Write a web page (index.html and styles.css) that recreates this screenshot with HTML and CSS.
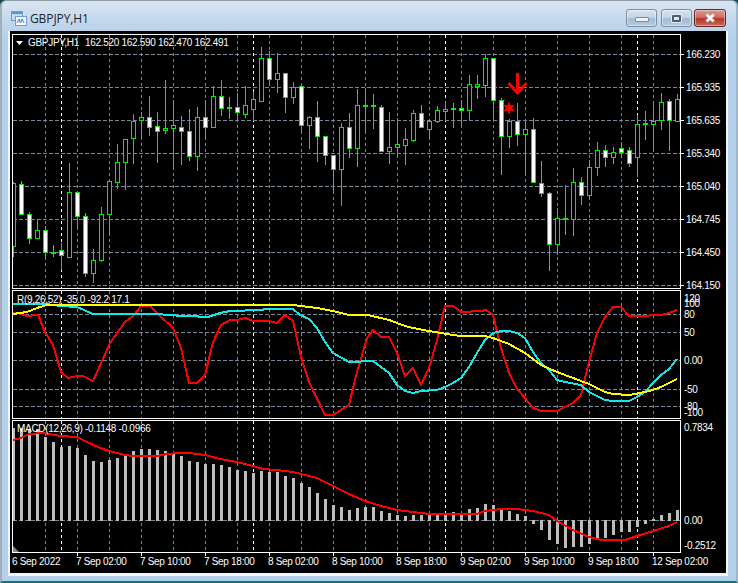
FILE: index.html
```html
<!DOCTYPE html>
<html lang="en">
<head>
<meta charset="utf-8">
<title>GBPJPY,H1</title>
<link rel="stylesheet" href="styles.css">
</head>
<body>
<div class="win">
  <header class="title">
    <svg class="app-icon" viewBox="0 0 16 16" width="16" height="16" aria-hidden="true">
      <rect x="0.5" y="0.5" width="11" height="9" fill="#bcd8f2" stroke="#6f9fd6"/>
      <rect x="1" y="1" width="10" height="2" fill="#5f93d2"/>
      <path d="M2 5h1M5 5h1M8 5h1" stroke="#fff"/>
      <rect x="4.5" y="5.500" width="11" height="9" fill="#f4f9ff" stroke="#6f9fd6"/>
      <path d="M6 12l2-4 1.500 4 1.500-4 2 4" fill="none" stroke="#3f7cc2"/>
    </svg>
    <span class="title-text">GBPJPY,H1</span>
    <div class="btns">
      <div class="btn btn-min"><span class="glyph-min"></span></div>
      <div class="btn btn-max"><span class="glyph-max"></span></div>
      <div class="btn btn-close"><span class="glyph-close">✖</span></div>
    </div>
  </header>
  <main class="client">
    <svg class="chart" viewBox="10 31 716 542" width="716" height="542" xmlns="http://www.w3.org/2000/svg">
      <defs>
        <clipPath id="clip-main"><rect x="13" y="35" width="667" height="253"/></clipPath>
        <clipPath id="clip-osc"><rect x="13" y="291" width="667" height="127"/></clipPath>
        <clipPath id="clip-macd"><rect x="13" y="421" width="667" height="131"/></clipPath>
      </defs>

      <g id="grid"></g>
      <g id="candles" clip-path="url(#clip-main)"></g>

      <g clip-path="url(#clip-osc)" class="aliased">
        <polyline class="ln ln-red" points="13,313 18,313 27,316 38,315 45,332 53,345 61,372 68,378 77,376 83,376 93,381 98,370 110,343 125,322 133,316 141,306 150,306 158,314 173,328 181,348 189,383 197,383 205,375 213,342 221,325 230,320 237,320 245,318 253,321 269,321 277,323 285,315 293,321 301,357 309,382 325,415 333,415 349,405 357,372 367,338 373,330 381,337 389,337 397,353 405,376 413,368 421,385 429,368 437,340 445,306 453,306 461,312 481,311 486,310 493,315 501,348 509,373 517,389 525,398 533,408 541,411 557,411 565,407 573,403 581,395 589,362 597,333 605,317 613,307 621,307 629,316 637,316 661,315 669,313 677,310"/>
        <polyline class="ln ln-cyan" points="13,304 47,304 60,306 77,307 93,314 157,314 182,316 197,316 200,317 208,317 220,313 230,311 260,310 267,309 293,309 300,315 309,319 317,328 325,342 333,353 349,362 373,361 381,367 389,373 397,385 405,391 413,393 421,391 437,390 445,387 453,383 461,378 469,367 477,353 485,340 493,333 501,331 509,331 517,333 525,338 533,352 541,363 549,370 557,380 565,382 581,385 589,392 597,396 605,400 613,401 629,401 637,397 645,392 653,383 661,375 669,369 677,359"/>
        <polyline class="ln ln-yellow" points="13,314 20,313 27,312 37,308 47,305 293,305 309,307 317,308 333,311 349,315 368,315 389,320 405,326 413,328 429,331 453,335 461,336 485,336 493,338 509,344 525,353 541,365 557,372 573,378 589,384 605,392 613,394 629,395 645,392 653,390 661,387 677,379"/>
      </g>

      <g id="macd-bars" clip-path="url(#clip-macd)"></g>
      <g clip-path="url(#clip-macd)" class="aliased">
        <polyline class="ln ln-red" points="13,440 21,438 29,434 43,433 61,436 77,437 85,441 100,448 109,451 125,455 133,456 157,456 167,454 180,453 189,453 205,455 220,459 237,462 253,466 263,469 277,470 293,472 317,478 333,486 349,494 365,501 381,506 397,510 413,512 429,514 477,514 485,511 501,509 517,509 533,511 549,515 557,521 573,530 589,537 601,540 625,540 637,536 653,531 669,526 677,522"/>
      </g>

      <g class="marker">
        <path class="arrow" d="M517.500 73V93M508.500 83l9 10 9-10"/>
        <polygon class="star" points="509,101 510.500,105.400 515,104.500 512,108 515,111.500 510.500,110.600 509,115 507.500,110.600 503,111.500 506,108 503,104.500 507.500,105.400"/>
      </g>

      <g class="frames">
        <rect x="12.500" y="34.500" width="668" height="254"/>
        <rect x="12.500" y="290.500" width="668" height="128"/>
        <rect x="12.500" y="420.500" width="668" height="132"/>
      </g>
      <polygon class="corner" points="13,546 19,552 13,552"/>
      <g id="ticks"></g>

      <polygon class="menu-arrow" points="16,41 23,41 19.500,45"/>
      <text class="lbl" x="28" y="46">GBPJPY,H1</text>
      <text class="lbl" x="85" y="46">162.520 162.590 162.470 162.491</text>
      <text class="lbl" x="17" y="303">R(9,26,52) -35.0 -92.2 17.1</text>
      <text class="lbl" x="17" y="432">MACD(12,26,9) -0.1148 -0.0966</text>

      <text class="lbl" x="686" y="58">166.230</text>
      <text class="lbl" x="686" y="91">165.935</text>
      <text class="lbl" x="686" y="124">165.635</text>
      <text class="lbl" x="686" y="157">165.340</text>
      <text class="lbl" x="686" y="190">165.040</text>
      <text class="lbl" x="686" y="223">164.745</text>
      <text class="lbl" x="686" y="256">164.450</text>
      <text class="lbl" x="686" y="289">164.150</text>

      <text class="lbl" x="684" y="302">120</text>
      <text class="lbl" x="684" y="307">100</text>
      <text class="lbl" x="684" y="318">80</text>
      <text class="lbl" x="684" y="336">50</text>
      <text class="lbl" x="684" y="364">0.00</text>
      <text class="lbl" x="684" y="393">-50</text>
      <text class="lbl" x="684" y="410">-80</text>
      <text class="lbl" x="684" y="416">-100</text>

      <text class="lbl" x="684" y="431">0.7834</text>
      <text class="lbl" x="684" y="524">0.00</text>
      <text class="lbl" x="684" y="549">-0.2512</text>

      <text class="lbl" x="12" y="565">6 Sep 2022</text>
      <text class="lbl" x="76" y="565">7 Sep 02:00</text>
      <text class="lbl" x="140" y="565">7 Sep 10:00</text>
      <text class="lbl" x="204" y="565">7 Sep 18:00</text>
      <text class="lbl" x="268" y="565">8 Sep 02:00</text>
      <text class="lbl" x="332" y="565">8 Sep 10:00</text>
      <text class="lbl" x="396" y="565">8 Sep 18:00</text>
      <text class="lbl" x="460" y="565">9 Sep 02:00</text>
      <text class="lbl" x="524" y="565">9 Sep 10:00</text>
      <text class="lbl" x="588" y="565">9 Sep 18:00</text>
      <text class="lbl" x="652" y="565">12 Sep 02:00</text>
    </svg>
  </main>
</div>
<script src="chart.js"></script>
</body>
</html>
```

FILE: styles.css
```css
* { box-sizing: border-box; }

html, body {
  margin: 0;
  height: 100%;
  background: #16454f;
}

.win {
  width: 738px;
  height: 583px;
  display: flex;
  flex-direction: column;
  border-style: solid;
  border-color: #8d9aa6 #9fb8d0 #1a7378 #a3aeb9;
  border-width: 1px 2px 2px 2px;
  border-radius: 6px 6px 0 0;
  background: linear-gradient(180deg, #dbe6f2 0, #c3d7ec 20px, #b4cfe9 40px, #b4cfe9 100%);
  overflow: hidden;
}

.title {
  height: 30px;
  flex: none;
  display: flex;
  align-items: flex-start;
  padding: 9px 10px 0 9px;
}

.app-icon { flex: none; margin-top: 1px; }

.title-text {
  margin-left: 3px;
  font: 12px/18px "Open Sans", "Noto Sans", sans-serif;
  color: #1c2530;
  letter-spacing: -0.1px;
}

.btns {
  margin: -1px 0 0 auto;
  display: flex;
}

.btn {
  width: 31px;
  height: 18px;
  border: 1px solid #7b8ea2;
  border-radius: 3px;
  display: flex;
  align-items: center;
  justify-content: center;
  background: linear-gradient(180deg, #d6e2ef 0, #c4d5e7 45%, #a3bbd3 55%, #b4cbe1 100%);
  box-shadow: inset 0 0 0 1px rgba(255, 255, 255, 0.4);
}

.btn-max { margin-left: 4px; }

.btn-close {
  width: 32px;
  margin-left: 2px;
  border-color: #5b2a28;
  background: linear-gradient(180deg, #dd9c90 0, #cf6d60 45%, #b4352a 55%, #c9685a 100%);
}

.glyph-min {
  width: 14px;
  height: 5px;
  margin-top: 3px;
  background: #eef2f6;
  border: 1px solid #7b8b9c;
  border-radius: 1px;
}

.glyph-max {
  width: 9px;
  height: 7px;
  border: 2px solid #4b5d71;
  border-radius: 1px;
  background: #dfe8f1;
  box-shadow: 0 0 0 1px #e6edf4;
}

.glyph-close {
  font: bold 14px/14px "DejaVu Sans", sans-serif;
  color: #f6f6f6;
  text-shadow: 0 0 1px #5b2a28;
}

.client {
  flex: none;
  width: 720px;
  height: 545px;
  margin: 0 8px 5px 6px;
  border-style: solid;
  border-color: #f2f6fa;
  border-width: 0 2px 3px 2px;
  background: #000;
}

.chart { display: block; }

.aliased, .frames, #grid, #candles, #macd-bars, #ticks { shape-rendering: crispEdges; }

.ln { fill: none; stroke-width: 2; stroke-linejoin: round; }
.ln-red { stroke: #ff0000; }
.ln-cyan { stroke: #12e8ea; }
.ln-yellow { stroke: #ffff00; }

.grid-line { stroke: #778899; stroke-width: 1; stroke-dasharray: 4 2; }
.grid-v { stroke-dasharray: 3 3; }
.sep { stroke: #ffffff; stroke-width: 1; stroke-dasharray: 3 3; }

.wick { fill: #00f000; }
.bull { fill: #000; stroke: #00f000; stroke-width: 1; }
.bear { fill: #fff; stroke: #00f000; stroke-width: 1; }
.bar { fill: #bdbdbd; }

.frames rect { fill: none; stroke: #fff; stroke-width: 1; }
.tick { stroke: #fff; stroke-width: 1; }
.corner { fill: #778899; }
.menu-arrow { fill: #fff; }

.arrow { fill: none; stroke: #ff0000; stroke-width: 3; }
.star { fill: #ff0000; }

.lbl {
  font-family: "Liberation Sans", Arial, sans-serif;
  font-size: 10px;
  letter-spacing: -0.3px;
  fill: #fff;
}
```

FILE: chart.js
```js
// Each candle: [high, bodyTop, bodyBottom, low, kind]; b = up, s = down, d = doji
var CANDLES = [
  [182,183,246,257,'b'],[181,184,214,215,'s'],[212,214,238,244,'s'],[219,230,238,238,'b'],
  [226,230,252,260,'s'],[245,252,252,257,'d'],[243,250,255,270,'s'],[163,192,257,258,'b'],
  [192,192,216,229,'s'],[213,216,273,277,'s'],[249,260,273,283,'b'],[207,214,260,262,'b'],
  [181,181,214,236,'b'],[144,162,182,189,'b'],[139,139,162,190,'b'],[114,121,138,164,'b'],
  [112,117,120,138,'b'],[96,117,127,136,'s'],[112,126,131,163,'s'],[80,128,130,134,'b'],
  [100,125,128,168,'b'],[116,127,131,165,'s'],[109,131,156,161,'s'],[107,117,156,171,'b'],
  [100,117,127,140,'s'],[86,96,127,127,'b'],[80,96,108,116,'s'],[97,107,107,119,'d'],
  [93,107,112,120,'s'],[86,105,114,118,'b'],[92,99,109,121,'b'],[47,58,101,102,'b'],
  [51,58,79,86,'s'],[53,73,79,93,'b'],[73,73,97,113,'s'],[82,87,97,104,'b'],
  [86,86,125,133,'s'],[116,117,125,149,'b'],[101,117,136,162,'s'],[136,136,155,165,'s'],
  [155,155,169,193,'s'],[123,127,169,206,'b'],[113,127,148,158,'s'],[89,105,148,167,'b'],
  [88,105,105,133,'d'],[94,105,105,129,'d'],[105,107,151,152,'s'],[112,147,151,164,'b'],
  [118,144,147,157,'b'],[128,139,145,165,'b'],[110,113,140,142,'b'],[105,113,127,128,'s'],
  [119,121,129,138,'b'],[106,110,121,123,'b'],[101,109,111,121,'b'],[103,108,108,128,'d'],
  [100,108,110,127,'s'],[75,84,110,120,'b'],[75,84,86,99,'b'],[54,58,85,97,'b'],
  [58,58,100,120,'s'],[98,100,136,175,'s'],[119,121,136,148,'b'],[103,121,134,146,'s'],
  [121,129,134,175,'b'],[118,129,182,183,'s'],[161,183,193,197,'s'],[192,193,244,271,'s'],
  [208,218,244,255,'b'],[185,218,218,235,'d'],[168,182,219,236,'b'],[177,182,195,205,'s'],
  [160,167,195,198,'b'],[142,150,167,176,'b'],[145,150,157,167,'s'],[147,152,157,164,'b'],
  [142,148,152,157,'s'],[147,150,163,167,'s'],[115,124,157,177,'b'],[111,123,123,140,'d'],
  [101,121,124,150,'b'],[93,102,120,130,'b'],[99,101,120,151,'s'],[94,99,121,121,'b']
];

// Top (or bottom, when below the zero line) of each histogram bar, in pixels
var MACD = [
  428,428,429,429,437,442,447,446,448,455,461,462,460,458,456,451,449,449,450,451,453,
  456,461,462,464,464,465,467,470,471,473,471,472,472,476,478,483,487,493,499,505,507,
  510,508,507,507,511,513,515,516,515,515,515,515,515,512,513,509,508,504,505,510,511,
  514,516,523,529,539,543,547,546,546,543,539,537,534,531,531,526,523,519,515,513,510
];

var ZERO = 520;
var NS = 'http://www.w3.org/2000/svg';

function add(parent, tag, cls, attrs) {
  var el = document.createElementNS(NS, tag);
  el.setAttribute('class', cls);
  for (var k in attrs) el.setAttribute(k, attrs[k]);
  parent.appendChild(el);
  return el;
}

function col(n) { return 13 + 8 * n; }

function drawGrid() {
  var g = document.getElementById('grid');
  var levels = [54, 87, 120, 153, 186, 219, 252, 285, 314, 332, 360, 389, 406, ZERO];
  levels.forEach(function (y) {
    add(g, 'line', 'grid-line', { x1: 13, x2: 680, y1: y + 0.5, y2: y + 0.5 });
  });
  var panes = [[35, 288], [291, 418], [421, 552]];
  panes.forEach(function (p) {
    for (var x = 45; x < 680; x += 32) {
      add(g, 'line', 'grid-line grid-v', { x1: x + 0.5, x2: x + 0.5, y1: p[0], y2: p[1] });
    }
    [61, 253, 445, 637].forEach(function (x) {
      add(g, 'line', 'sep', { x1: x + 0.5, x2: x + 0.5, y1: p[0], y2: p[1] });
    });
  });
}

function drawCandles() {
  var g = document.getElementById('candles');
  CANDLES.forEach(function (c, n) {
    var x = col(n);
    add(g, 'rect', 'wick', { x: x, y: c[0], width: 1, height: Math.max(1, c[3] - c[0]) });
    if (c[4] === 'd') {
      add(g, 'rect', 'wick', { x: x - 2, y: c[1], width: 5, height: 2 });
    } else {
      add(g, 'rect', c[4] === 'b' ? 'bull' : 'bear', {
        x: x - 1.5, y: c[1] + 0.5, width: 4, height: Math.max(1, c[2] - c[1])
      });
    }
  });
}

function drawMacd() {
  var g = document.getElementById('macd-bars');
  MACD.forEach(function (y, n) {
    add(g, 'rect', 'bar', {
      x: col(n) - 1, y: Math.min(y, ZERO), width: 3, height: Math.abs(ZERO - y) + 1
    });
  });
}

function drawTicks() {
  var g = document.getElementById('ticks');
  [54, 87, 120, 153, 186, 219, 252, 285].forEach(function (y) {
    add(g, 'line', 'tick', { x1: 681, x2: 684, y1: y + 0.5, y2: y + 0.5 });
  });
  for (var x = 77; x < 680; x += 64) {
    add(g, 'line', 'tick', { x1: x + 0.5, x2: x + 0.5, y1: 553, y2: 556 });
  }
}

drawGrid();
drawCandles();
drawMacd();
drawTicks();
```
